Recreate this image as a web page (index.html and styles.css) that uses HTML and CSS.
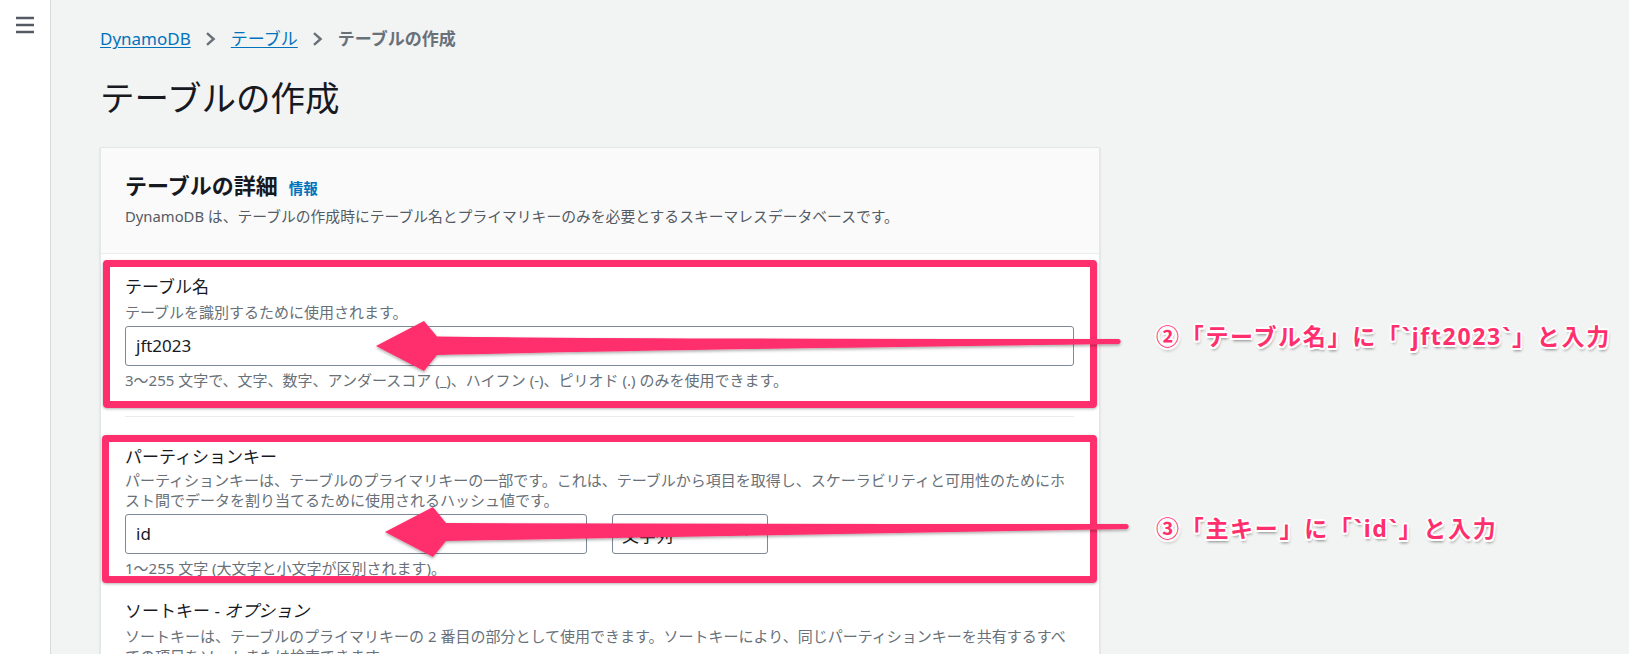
FILE: index.html
```html
<!DOCTYPE html>
<html lang="ja">
<head>
<meta charset="utf-8">
<title>テーブルの作成</title>
<link rel="stylesheet" href="styles.css">
</head>
<body>
<div class="app">
  <aside class="sidebar">
    <button class="menu-btn" aria-label="menu">
      <svg width="18" height="18" viewBox="0 0 18 18"><path d="M0 2h18M0 9h18M0 16h18" stroke="#545b64" stroke-width="2.5" fill="none"/></svg>
    </button>
  </aside>
  <main class="main">
    <nav class="breadcrumb">
      <a href="#">DynamoDB</a>
      <svg class="chev" viewBox="0 0 11 14"><path d="M2 1.2 8.6 7 2 12.8" stroke="#687078" stroke-width="2.4" fill="none"/></svg>
      <a href="#">テーブル</a>
      <svg class="chev" viewBox="0 0 11 14"><path d="M2 1.2 8.6 7 2 12.8" stroke="#687078" stroke-width="2.4" fill="none"/></svg>
      <span class="current">テーブルの作成</span>
    </nav>
    <h1 class="page-title">テーブルの作成</h1>
    <section class="card">
      <header class="card-header">
        <h2 class="card-title"><span>テーブルの詳細</span><a class="info" href="#">情報</a></h2>
        <p class="card-desc">DynamoDB は、テーブルの作成時にテーブル名とプライマリキーのみを必要とするスキーマレスデータベースです。</p>
      </header>
      <div class="card-body">
        <div class="field mark mark-1">
          <label class="field-label">テーブル名</label>
          <p class="field-desc">テーブルを識別するために使用されます。</p>
          <div class="input">jft2023</div>
          <p class="field-hint">3〜255 文字で、文字、数字、アンダースコア (_)、ハイフン (-)、ピリオド (.) のみを使用できます。</p>
        </div>
        <hr class="divider">
        <div class="field field-2 mark mark-2">
          <label class="field-label">パーティションキー</label>
          <p class="field-desc field-desc-tight">パーティションキーは、テーブルのプライマリキーの一部です。これは、テーブルから項目を取得し、スケーラビリティと可用性のためにホスト間でデータを割り当てるために使用されるハッシュ値です。</p>
          <div class="key-row">
            <div class="input key-input">id</div>
            <div class="select"><span>文字列</span><svg class="caret" viewBox="0 0 7 4"><path d="M0 0h7L3.5 4z" fill="#545b64"/></svg></div>
          </div>
          <p class="field-hint">1〜255 文字 (大文字と小文字が区別されます)。</p>
        </div>
        <div class="field field-3">
          <label class="field-label">ソートキー - <em>オプション</em></label>
          <p class="field-desc">ソートキーは、テーブルのプライマリキーの 2 番目の部分として使用できます。ソートキーにより、同じパーティションキーを共有するすべての項目をソートまたは検索できます。</p>
        </div>
      </div>
    </section>
  </main>
</div>
<div class="annotations">
  <svg class="arrows" width="1629" height="654" viewBox="0 0 1629 654">
    <defs>
      <filter id="sh" x="-5%" y="-50%" width="110%" height="200%">
        <feDropShadow dx="0" dy="1.5" stdDeviation="1.5" flood-color="#000" flood-opacity="0.35"/>
      </filter>
    </defs>
    <path fill="#ff2e6c" filter="url(#sh)" d="M376 346 L424 321 L437 336.5 Q640 339 1119 339 Q1122.5 341.5 1119 344 Q640 350 437 355 L424 371 Z"/>
    <path fill="#ff2e6c" filter="url(#sh)" d="M385 532 L433 507 L446 523 Q790 524 1127 524 Q1130.5 526.5 1127 529 Q790 535 446 541 L433 557 Z"/>
  </svg>
  <div class="note note-1">②「テーブル名」に「`jft2023`」と入力</div>
  <div class="note note-2">③「主キー」に「`id`」と入力</div>
</div>
</body>
</html>
```

FILE: styles.css
```css
html, body {
  margin: 0;
  padding: 0;
}

body {
  position: relative;
  width: 1629px;
  height: 654px;
  overflow: hidden;
  background: #f2f3f3;
  color: #16191f;
  font-family: "Noto Sans", "Noto Sans CJK JP", sans-serif;
}

.app {
  display: flex;
  height: 100%;
}

.sidebar {
  flex: none;
  width: 50px;
  background: #ffffff;
  border-right: 1px solid #d5dbdb;
}

.menu-btn {
  display: block;
  margin: 16px 0 0 16px;
  padding: 0;
  width: 18px;
  height: 18px;
  border: 0;
  background: none;
}

.menu-btn svg {
  display: block;
}

.main {
  flex: 1;
  padding: 27px 0 0 49px;
}

.breadcrumb {
  display: flex;
  align-items: center;
  height: 24px;
  font-size: 17px;
  line-height: 24px;
}

.breadcrumb a {
  color: #0073bb;
  text-decoration: underline;
  text-underline-offset: 2px;
}

.chev {
  width: 11px;
  height: 14px;
  margin: 0 15px 0 14px;
  flex: none;
}

.current {
  color: #687078;
  font-weight: 700;
}

.page-title {
  margin: 27px 0 0;
  font-size: 34.5px;
  line-height: 40px;
  font-weight: 400;
  color: #16191f;
}

.card {
  margin-top: 29px;
  width: 1000px;
  box-sizing: border-box;
  background: #ffffff;
  border: 1px solid #e4e7e8;
  box-shadow: 0 1px 2px rgba(0, 28, 36, 0.12);
}

.card-header {
  background: #fafafa;
  padding: 22px 24px 26px;
  border-bottom: 1px solid #eaeded;
}

.card-title {
  display: flex;
  align-items: baseline;
  gap: 11px;
  margin: 0;
  font-size: 22px;
  line-height: 30px;
  font-weight: 700;
}

.info {
  font-size: 14.5px;
  font-weight: 700;
  color: #0073bb;
  text-decoration: none;
}

.card-desc {
  margin: 2px 0 0;
  font-size: 14.8px;
  line-height: 22px;
  color: #545b64;
}

.card-body {
  padding: 22px 25px 0 24px;
}

.field {
  position: relative;
}

.field-label {
  display: block;
  font-size: 17px;
  line-height: 22px;
  color: #16191f;
}

.field-label em {
  font-style: italic;
}

.field-desc {
  margin: 4px 0 0;
  font-size: 15px;
  line-height: 20px;
  color: #687078;
}

.field-desc-tight {
  margin-top: 2px;
}

.input {
  margin-top: 4px;
  height: 40px;
  box-sizing: border-box;
  padding: 0 10px;
  border: 1px solid #7d8998;
  border-radius: 3px;
  background: #ffffff;
  font-size: 17px;
  line-height: 38px;
  color: #16191f;
}

.field-hint {
  margin: 4px 0 0;
  font-size: 15px;
  line-height: 20px;
  color: #687078;
}

.divider {
  margin: 26px 0 0;
  height: 0;
  border: 0;
  border-top: 1px solid #e9ebed;
}

.field-2 {
  margin-top: 29px;
}

.key-row {
  display: flex;
  gap: 25px;
  margin-top: 4px;
}

.key-input {
  margin-top: 0;
  width: 462px;
}

.select {
  display: flex;
  align-items: center;
  justify-content: space-between;
  width: 156px;
  height: 40px;
  box-sizing: border-box;
  padding: 0 17px 0 9px;
  border: 1px solid #7d8998;
  border-radius: 3px;
  background: #ffffff;
  font-size: 17px;
  color: #16191f;
}

.caret {
  width: 7px;
  height: 4px;
}

.field-3 {
  margin-top: 22px;
}

.mark::after {
  content: "";
  position: absolute;
  border: 7px solid #ff2e6c;
  border-radius: 4px;
  box-shadow: 0 1px 3px rgba(0, 0, 0, 0.3);
  pointer-events: none;
}

.mark-1::after {
  top: -16px;
  bottom: -18px;
  left: -22px;
  right: -23px;
}

.mark-2::after {
  top: -11px;
  bottom: -5px;
  left: -23px;
  right: -23px;
}

.annotations {
  position: absolute;
  left: 0;
  top: 0;
  width: 1629px;
  height: 654px;
  pointer-events: none;
}

.arrows {
  position: absolute;
  left: 0;
  top: 0;
}

.note {
  position: absolute;
  left: 1156px;
  font-size: 23px;
  line-height: 30px;
  font-weight: 700;
  letter-spacing: 1.7px;
  white-space: nowrap;
  color: #ff2e6c;
  text-shadow:
    -2px 0 0 #fff, 2px 0 0 #fff, 0 -2px 0 #fff, 0 2px 0 #fff,
    -1.5px -1.5px 0 #fff, 1.5px 1.5px 0 #fff, -1.5px 1.5px 0 #fff, 1.5px -1.5px 0 #fff,
    1px 2.5px 3px rgba(0, 0, 0, 0.45);
}

.note-1 {
  top: 321px;
}

.note-2 {
  top: 513px;
}
```
